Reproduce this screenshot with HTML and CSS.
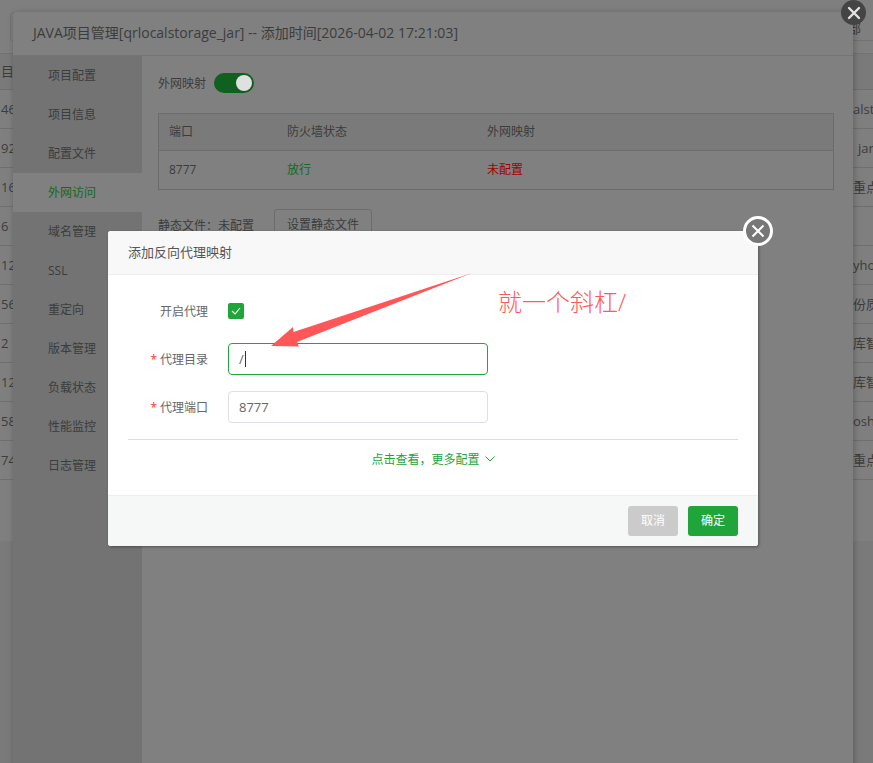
FILE: index.html
```html
<!DOCTYPE html>
<html>
  <head>
    <title>JAVA项目管理</title>
    <link rel="stylesheet" href="styles.css">
  </head>
  <body>
    <div class="page">
      <div class="toolbar">
        <div class="toolbar-box"></div>
        <div class="toolbar-right">全部</div>
      </div>
      <div class="list-row list-head"><span class="cell-left">目PI</span><span class="cell-right"></span></div>
      <div class="list-row"><span class="cell-left">46</span><span class="cell-right">alstorage</span></div>
      <div class="list-row"><span class="cell-left">92</span><span class="cell-right indent">jar</span></div>
      <div class="list-row"><span class="cell-left">16</span><span class="cell-right">重点商品</span></div>
      <div class="list-row"><span class="cell-left">6</span><span class="cell-right"></span></div>
      <div class="list-row"><span class="cell-left">12</span><span class="cell-right">yhost</span></div>
      <div class="list-row"><span class="cell-left">56</span><span class="cell-right">份质量</span></div>
      <div class="list-row"><span class="cell-left">2</span><span class="cell-right">库智能</span></div>
      <div class="list-row"><span class="cell-left">12</span><span class="cell-right">库智能</span></div>
      <div class="list-row"><span class="cell-left">58</span><span class="cell-right">oshe</span></div>
      <div class="list-row"><span class="cell-left">74</span><span class="cell-right">重点商品</span></div>
      <div class="page-gap"></div>
    </div>

    <div class="project-modal">
      <div class="project-title">JAVA项目管理[qrlocalstorage_jar] -- 添加时间[2026-04-02 17:21:03]</div>
      <div class="project-body">
        <div class="side-menu">
          <div class="menu-item">项目配置</div>
          <div class="menu-item">项目信息</div>
          <div class="menu-item">配置文件</div>
          <div class="menu-item active">外网访问</div>
          <div class="menu-item">域名管理</div>
          <div class="menu-item">SSL</div>
          <div class="menu-item">重定向</div>
          <div class="menu-item">版本管理</div>
          <div class="menu-item">负载状态</div>
          <div class="menu-item">性能监控</div>
          <div class="menu-item">日志管理</div>
        </div>
        <div class="project-main">
          <div class="switch-row">
            <span>外网映射</span>
            <span class="switch"><span class="switch-knob"></span></span>
          </div>
          <div class="port-table">
            <div class="port-row port-head">
              <span class="col-port">端口</span>
              <span class="col-firewall">防火墙状态</span>
              <span>外网映射</span>
            </div>
            <div class="port-row">
              <span class="col-port">8777</span>
              <span class="col-firewall text-pass">放行</span>
              <span class="text-none">未配置</span>
            </div>
          </div>
          <div class="static-row">
            <span>静态文件：未配置</span>
            <span class="static-button">设置静态文件</span>
          </div>
        </div>
      </div>
    </div>
    <div class="project-close">
      <svg width="14" height="14" viewBox="0 0 14 14"><path d="M2 2L12 12M12 2L2 12" stroke="#e2e2e2" stroke-width="2.4" stroke-linecap="round"/></svg>
    </div>

    <div class="proxy-modal">
      <div class="proxy-title">添加反向代理映射</div>
      <div class="proxy-body">
        <div class="form-row">
          <label class="form-label">开启代理</label>
          <span class="checkbox">
            <svg width="10" height="8" viewBox="0 0 10 8"><path d="M1 4L4 7L9 1" fill="none" stroke="#fff" stroke-width="1.1"/></svg>
          </span>
        </div>
        <div class="form-row">
          <label class="form-label"><span class="required">*</span>代理目录</label>
          <div class="form-input focused">/<span class="caret"></span></div>
        </div>
        <div class="form-row">
          <label class="form-label"><span class="required">*</span>代理端口</label>
          <div class="form-input">8777</div>
        </div>
        <div class="more-config">
          <span>点击查看，更多配置</span>
          <svg width="10" height="6" viewBox="0 0 10 6"><path d="M0.5 0.5L5 5L9.5 0.5" fill="none" stroke="#20a53a" stroke-width="1"/></svg>
        </div>
      </div>
      <div class="proxy-footer">
        <span class="btn btn-cancel">取消</span>
        <span class="btn btn-ok">确定</span>
      </div>
    </div>
    <div class="proxy-close">
      <svg width="14" height="14" viewBox="0 0 14 14"><path d="M1.5 1.5L12.5 12.5M12.5 1.5L1.5 12.5" stroke="#fff" stroke-width="2"/></svg>
    </div>

    <svg class="arrow" width="873" height="763" viewBox="0 0 873 763">
      <polygon points="472,273 293.5,332 293,327 271,346 299,346.5 297,342" fill="#ff5757"/>
    </svg>
    <div class="note">就一个斜杠/</div>
  </body>
</html>
```

FILE: styles.css
```css
html, body {
  margin: 0;
  height: 100%;
}

body {
  position: relative;
  width: 873px;
  height: 763px;
  overflow: hidden;
  background-color: #7a7a7a;
  color: #3c3c3c;
  font-family: "Open Sans", "Noto Sans CJK SC", sans-serif;
  font-size: 12px;
}

/* page behind the dialogs */
.page {
  background-color: #7f7f7f;
}

.toolbar {
  display: flex;
  justify-content: space-between;
  align-items: flex-start;
  height: 54px;
  box-sizing: border-box;
  border-bottom: 1px solid #727272;
}

.toolbar-box {
  width: 30px;
  height: 28px;
  margin: 12px 0 0 10px;
  border: 1px solid #727272;
  border-radius: 4px;
}

.toolbar-right {
  width: 38px;
  height: 29px;
  border-bottom: 1px solid #727272;
  padding-top: 20px;
  box-sizing: content-box;
  height: 20px;
  line-height: 16px;
  font-size: 13px;
}

.list-row {
  display: flex;
  justify-content: space-between;
  height: 39px;
  box-sizing: border-box;
  border-bottom: 1px solid #6f6f6f;
  line-height: 38px;
  font-size: 13px;
}

.list-head {
  height: 36px;
  line-height: 35px;
  background-color: #7a7a7a;
}

.cell-left {
  width: 13px;
  padding-left: 1px;
  box-sizing: border-box;
  overflow: hidden;
  white-space: nowrap;
}

.cell-right {
  width: 20px;
  overflow: hidden;
  white-space: nowrap;
}

.indent {
  padding-left: 5px;
  width: 15px;
}

.page-gap {
  height: 61px;
}

/* project dialog */
.project-modal {
  position: absolute;
  left: 13px;
  top: 12px;
  width: 840px;
  height: 760px;
  display: flex;
  flex-direction: column;
  background-color: #808080;
  border-radius: 3px;
  box-shadow: 1px 1px 6px rgba(0, 0, 0, 0.25);
}

.project-title {
  height: 43px;
  padding-left: 20px;
  line-height: 42px;
  font-size: 14px;
  border-bottom: 1px solid #747474;
  box-sizing: content-box;
}

.project-body {
  display: flex;
  flex: 1;
}

.side-menu {
  width: 129px;
  background-color: #737373;
}

.menu-item {
  height: 39px;
  padding-left: 35px;
  line-height: 39px;
}

.menu-item.active {
  background-color: #808080;
  color: #106a22;
}

.project-main {
  flex: 1;
  padding: 16px 19px 0 16px;
}

.switch-row {
  display: flex;
  align-items: center;
  gap: 8px;
  height: 22px;
}

.switch {
  display: flex;
  justify-content: flex-end;
  align-items: center;
  width: 40px;
  height: 20px;
  padding: 0 2px;
  box-sizing: border-box;
  border-radius: 10px;
  background-color: #10601f;
}

.switch-knob {
  width: 16px;
  height: 16px;
  border-radius: 50%;
  background-color: #e0e0e0;
}

.port-table {
  margin-top: 19px;
  border: 1px solid #6c6c6c;
}

.port-row {
  display: flex;
  height: 38px;
  line-height: 37px;
  padding-left: 10px;
}

.port-head {
  height: 36px;
  line-height: 36px;
  background-color: #7a7a7a;
  border-bottom: 1px solid #6c6c6c;
}

.col-port {
  width: 118px;
}

.col-firewall {
  width: 200px;
}

.text-pass {
  color: #0f6a20;
}

.text-none {
  color: #a00000;
}

.static-row {
  display: flex;
  align-items: center;
  gap: 20px;
  margin-top: 19px;
}

.static-button {
  height: 30px;
  padding: 0 12px;
  line-height: 30px;
  border: 1px solid #6c6c6c;
  border-radius: 3px;
}

.project-close {
  position: absolute;
  left: 841px;
  top: 0;
  width: 25px;
  height: 25px;
  display: flex;
  justify-content: center;
  align-items: center;
  border-radius: 50%;
  background-color: #444;
}

/* reverse proxy dialog */
.proxy-modal {
  position: absolute;
  left: 108px;
  top: 231px;
  width: 650px;
  height: 315px;
  display: flex;
  flex-direction: column;
  background-color: #fff;
  border-radius: 3px;
  box-shadow: 1px 1px 3px rgba(0, 0, 0, 0.35);
  color: #666;
}

.proxy-title {
  height: 43px;
  padding-left: 20px;
  line-height: 43px;
  font-size: 13px;
  color: #555;
  background-color: #f8f8f8;
  border-bottom: 1px solid #eee;
  border-radius: 3px 3px 0 0;
}

.proxy-body {
  flex: 1;
  margin: 0 20px;
  padding-top: 20px;
  box-sizing: border-box;
}

.form-row {
  display: flex;
  align-items: center;
  height: 32px;
  margin-bottom: 16px;
}

.form-label {
  width: 80px;
  text-align: right;
  margin-right: 20px;
}

.required {
  color: #f33;
  margin-right: 3px;
}

.checkbox {
  display: flex;
  justify-content: center;
  align-items: center;
  width: 16px;
  height: 16px;
  border-radius: 2px;
  background-color: #20a53a;
}

.form-input {
  display: flex;
  align-items: center;
  width: 260px;
  height: 32px;
  padding-left: 10px;
  box-sizing: border-box;
  border: 1px solid #dcdfe6;
  border-radius: 4px;
  font-size: 13px;
  color: #666;
}

.form-input.focused {
  border-color: #20a53a;
}

.caret {
  width: 1px;
  height: 16px;
  background-color: #333;
  margin-left: 1px;
}

.more-config {
  display: flex;
  justify-content: center;
  align-items: center;
  gap: 5px;
  height: 37px;
  border-top: 1px solid #ddd;
  color: #20a53a;
  margin-top: 8px;
}

.proxy-footer {
  display: flex;
  justify-content: flex-end;
  gap: 10px;
  height: 51px;
  padding: 10px 20px;
  box-sizing: border-box;
  background-color: #f6f8f8;
  border-top: 1px solid #eee;
  border-radius: 0 0 3px 3px;
}

.btn {
  width: 50px;
  height: 30px;
  line-height: 30px;
  text-align: center;
  border-radius: 3px;
  color: #fff;
}

.btn-cancel {
  background-color: #cbcbcb;
}

.btn-ok {
  background-color: #20a53a;
}

.proxy-close {
  position: absolute;
  left: 743px;
  top: 216px;
  width: 30px;
  height: 30px;
  box-sizing: border-box;
  display: flex;
  justify-content: center;
  align-items: center;
  border: 3px solid #fff;
  border-radius: 50%;
  background-color: #777;
}

/* annotation drawn on the screenshot */
.arrow {
  position: absolute;
  left: 0;
  top: 0;
}

.note {
  position: absolute;
  left: 498px;
  top: 284px;
  font-size: 24px;
  line-height: 36px;
  font-weight: 300;
  color: #ff5a5a;
}
```
